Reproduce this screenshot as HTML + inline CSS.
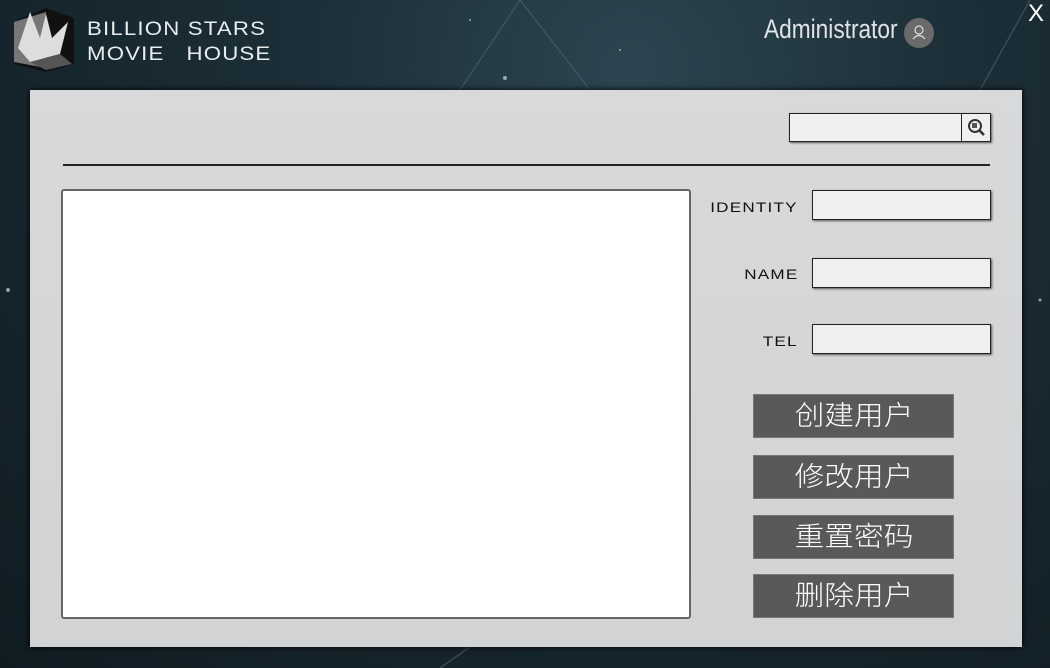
<!DOCTYPE html>
<html><head><meta charset="utf-8"><style>
*{margin:0;padding:0;box-sizing:border-box}
body{width:1050px;height:668px;overflow:hidden;position:relative;font-family:"Liberation Sans","Noto Sans CJK SC",sans-serif;
background:radial-gradient(ellipse at 60% 10%,#2c4550 0%,#1b2d36 40%,#101c22 100%);}
.logo{position:absolute;left:10px;top:8px}
.brand{position:absolute;left:87px;top:17px;color:#e8eef0;font-size:19px;letter-spacing:1px;line-height:25px;font-family:"Liberation Sans",sans-serif;transform:scaleX(1.17);transform-origin:left;white-space:nowrap}
.admin{position:absolute;left:764px;top:14px;color:#e0e4e6;font-family:"Liberation Sans Narrow","Liberation Sans",sans-serif;font-size:27px;transform:scaleX(.84);transform-origin:left}
.av{position:absolute;left:904px;top:18px;width:30px;height:30px;border-radius:50%;background:#6a6a6a}
.x{position:absolute;left:1028px;top:0px;color:#fff;font-size:24px}
.panel{position:absolute;left:30px;top:90px;width:992px;height:557px;background:linear-gradient(#d8d9da,#d2d3d4);box-shadow:0 0 6px #000}
.search{position:absolute;left:789px;top:113px;width:202px;height:29px;border:1px solid #222;background:#f0f0f0;box-shadow:1px 1px 2px #555}
.search .b{position:absolute;right:0;top:0;width:29px;height:27px;border-left:1px solid #222;background:#efefef}
.line{position:absolute;left:63px;top:164px;width:927px;height:2px;background:#222}
.list{position:absolute;left:61px;top:189px;width:630px;height:430px;background:#fff;border:2px solid #666;border-radius:3px}
.lbl{position:absolute;right:252px;font-size:14px;color:#111;letter-spacing:1px;transform:scaleX(1.22);transform-origin:right}
.inp{position:absolute;left:812px;width:179px;height:30px;border:1px solid #222;background:#efefef;box-shadow:1px 1px 2px #555}
.btn{position:absolute;left:753px;width:201px;height:44px;background:#595959;border:1px solid #777;color:#fff;font-size:27px;text-align:center;line-height:42px}
.btn span{display:inline-block;transform:scaleX(1.1);font-weight:300}
</style></head><body>
<svg width="1050" height="668" style="position:absolute;left:0;top:0">
<g stroke="#4e6470" stroke-width="1.2" fill="none" opacity=".7"><path d="M460 90 L520 0 L590 90"/><path d="M980 90 L1030 0"/><path d="M440 668 L480 640"/></g>
<g fill="#cfe" opacity=".6"><circle cx="505" cy="78" r="2"/><circle cx="470" cy="20" r="1"/><circle cx="620" cy="50" r="1"/><circle cx="1000" cy="120" r="1"/><circle cx="8" cy="290" r="2"/><circle cx="1040" cy="300" r="1.5"/></g>
</svg>
<svg class="logo" width="66" height="64" viewBox="0 0 66 64">
<polygon points="8,12 36,0 64,10 64,56 36,64 4,56" fill="#111"/>
<polygon points="4,14 36,4 36,60 4,54" fill="#777"/>
<polygon points="8,40 20,4 30,30 36,6 42,30 58,14 50,46 20,54" fill="#ddd"/>
<polygon points="20,54 50,46 62,56 36,62" fill="#555"/>
</svg>
<div class="brand">BILLION STARS<br>MOVIE&nbsp;&nbsp;&nbsp;HOUSE</div>
<div class="admin">Administrator</div>
<div class="av"><svg width="30" height="30"><circle cx="15" cy="12" r="4" fill="none" stroke="#ddd" stroke-width="1.2"/><path d="M9 21 Q15 14 21 21" fill="none" stroke="#ddd" stroke-width="1.2"/></svg></div>
<div class="x">X</div>
<div class="panel"></div>
<div class="search"><div class="b"><svg width="28" height="27"><circle cx="13" cy="12" r="6" fill="none" stroke="#333" stroke-width="2"/><rect x="10" y="9" width="5" height="5" fill="#555"/><path d="M17 16 L22 21" stroke="#333" stroke-width="2.5"/></svg></div></div>
<div class="line"></div>
<div class="list"></div>
<div class="lbl" style="top:199px">IDENTITY</div>
<div class="inp" style="top:190px"></div>
<div class="lbl" style="top:266px">NAME</div>
<div class="inp" style="top:258px"></div>
<div class="lbl" style="top:333px">TEL</div>
<div class="inp" style="top:324px"></div>
<div class="btn" style="top:394px"><span>创建用户</span></div>
<div class="btn" style="top:455px"><span>修改用户</span></div>
<div class="btn" style="top:515px"><span>重置密码</span></div>
<div class="btn" style="top:574px"><span>删除用户</span></div>
</body></html>
